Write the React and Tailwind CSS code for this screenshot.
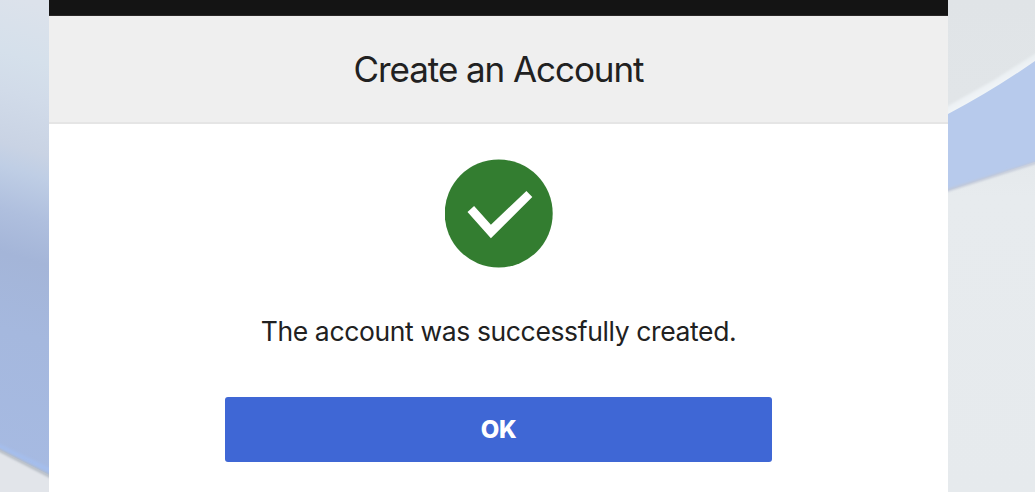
import React from 'react';

const LeftBackdrop = () => (
  <svg className="block w-[49px] h-[492px] shrink-0" viewBox="0 0 49 492" aria-hidden="true">
    <defs>
      <linearGradient id="left-sky" gradientUnits="userSpaceOnUse" x1="24" y1="0" x2="-106" y2="440">
        <stop offset="0" stopColor="#dce2eb" />
        <stop offset="0.12" stopColor="#d5e0eb" />
        <stop offset="0.2" stopColor="#d1dbe9" />
        <stop offset="0.31" stopColor="#c9d3e4" />
        <stop offset="0.36" stopColor="#bfcee5" />
        <stop offset="0.45" stopColor="#afbfde" />
        <stop offset="0.54" stopColor="#a4b5d8" />
        <stop offset="0.7" stopColor="#a5b8de" />
        <stop offset="1" stopColor="#a6bae2" />
      </linearGradient>
      <filter id="left-soft" x="-20%" y="-20%" width="140%" height="140%">
        <feGaussianBlur stdDeviation="1.2" />
      </filter>
    </defs>
    <rect width="49" height="492" fill="url(#left-sky)" />
    <path d="M-4 445 L53 472" stroke="#a5beec" strokeWidth="5" filter="url(#left-soft)" />
    <path d="M-4 448 L53 477 V500 H-4 Z" fill="#e2e5ea" />
    <path d="M-4 448.5 L53 478" stroke="#b5bcc5" strokeWidth="3" filter="url(#left-soft)" />
  </svg>
);

const RightBackdrop = () => (
  <svg className="block w-[87px] h-[492px] shrink-0" viewBox="0 0 87 492" aria-hidden="true">
    <defs>
      <linearGradient id="right-base" x1="0" y1="0" x2="0" y2="1">
        <stop offset="0" stopColor="#e0e4e7" />
        <stop offset="0.2" stopColor="#e1e5e8" />
        <stop offset="0.4" stopColor="#e7ebee" />
        <stop offset="1" stopColor="#e6eaed" />
      </linearGradient>
      <linearGradient id="right-edge" gradientUnits="userSpaceOnUse" x1="38" y1="80" x2="43" y2="89">
        <stop offset="0" stopColor="#e8edf0" />
        <stop offset="1" stopColor="#f0f4f7" />
      </linearGradient>
      <filter id="right-soft" x="-20%" y="-20%" width="140%" height="140%">
        <feGaussianBlur stdDeviation="0.9" />
      </filter>
    </defs>
    <rect width="87" height="492" fill="url(#right-base)" />
    <path d="M-4 108 L46 80 L91 51 V70 L46 96 L-4 122 Z" fill="url(#right-edge)" filter="url(#right-soft)" />
    <path d="M0 114 Q44 91 87 61 V162 L0 190.5 Z" fill="#b7caec" />
    <path d="M-4 191.5 L91 161.5" stroke="#c1c8d8" strokeWidth="2.5" filter="url(#right-soft)" />
  </svg>
);

const SuccessIcon = () => (
  <svg className="block w-[108px] h-[109px]" viewBox="0 0 108 109" aria-hidden="true">
    <circle cx="53.7" cy="54.5" r="54" fill="#337d30" />
    <path d="M22.5 53 L29.1 47 L45.9 65.7 L81.4 32 L87.3 38 L45.9 79.2 Z" fill="#fff" />
  </svg>
);

const App = () => {
  return (
    <div className="flex w-[1035px] h-[492px] overflow-hidden font-['Inter',sans-serif] text-[#212121]">
      <LeftBackdrop />

      <main className="flex flex-col w-[899px] bg-white">
        <div className="h-4 shrink-0 bg-[#141414] border-b border-[#292727]" />

        <header className="flex items-center justify-center h-[108px] shrink-0 bg-[#efefef] border-b-2 border-[#e5e5e5]">
          <h1 className="text-[35px] leading-[42px] tracking-[-1.07px] whitespace-nowrap">Create an Account</h1>
        </header>

        <section className="flex flex-col items-center pt-[35px]">
          <SuccessIcon />
          <p className="mt-[45px] text-[26.5px] leading-9 tracking-[-0.37px] whitespace-nowrap">
            The account was successfully created.
          </p>
          <button
            type="button"
            className="mt-[48px] w-[547px] h-[65px] rounded-[3px] bg-[#3f67d5] text-[24px] leading-8 font-extrabold tracking-[-0.3px] text-white"
          >
            OK
          </button>
        </section>
      </main>

      <RightBackdrop />
    </div>
  );
};

export default App;
